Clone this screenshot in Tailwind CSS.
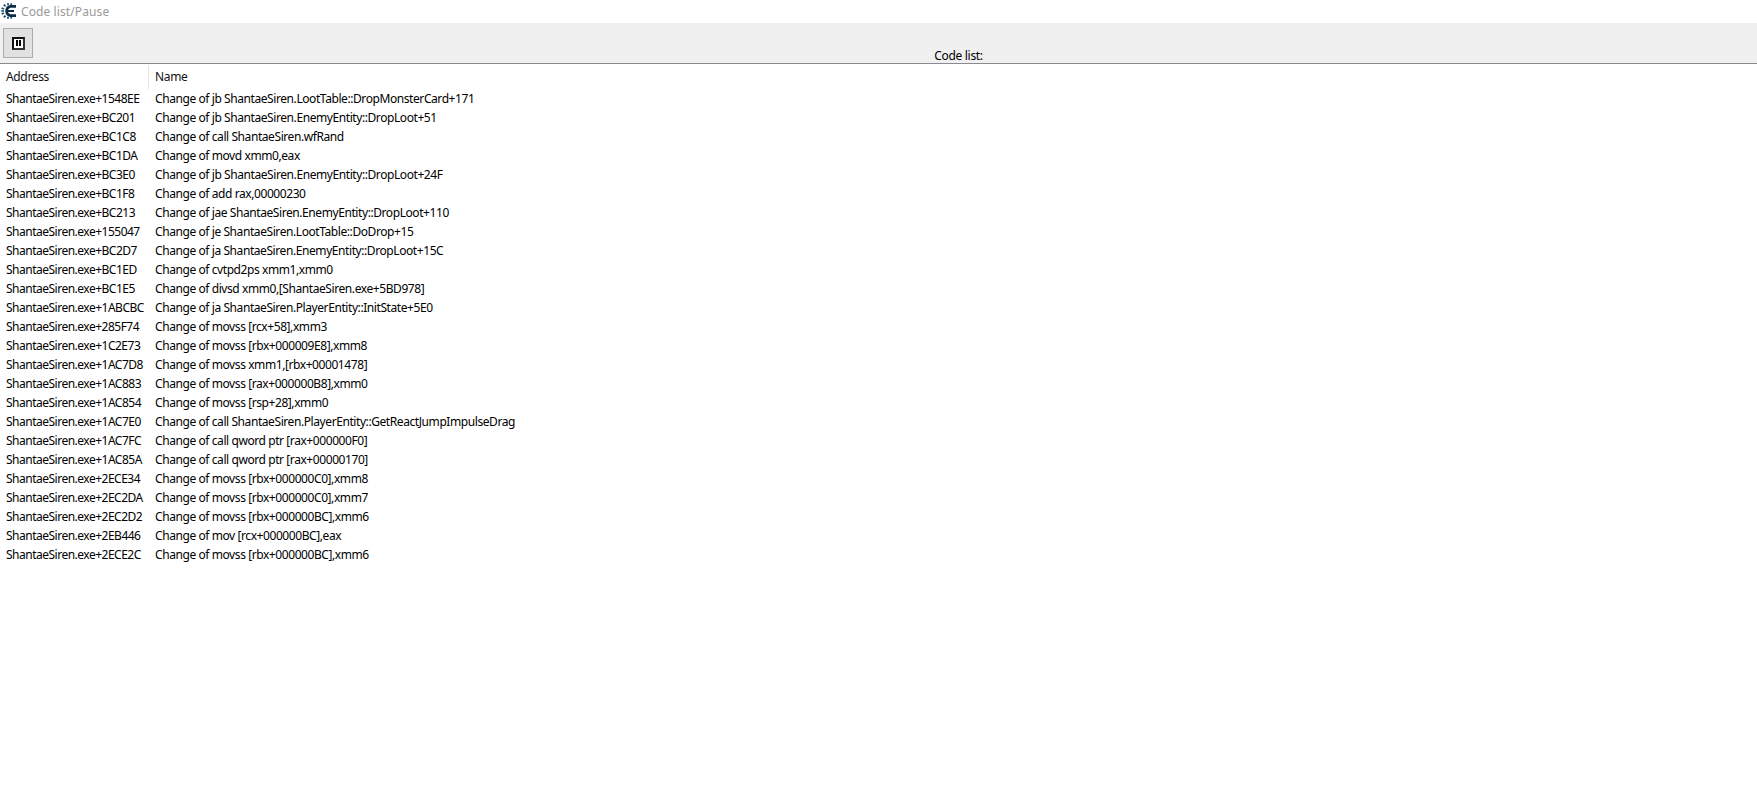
<!DOCTYPE html>
<html lang="en">
  <head>
    <meta charset="UTF-8" />
    <title>Code list/Pause</title>
    <script src="https://cdn.jsdelivr.net/npm/@tailwindcss/browser@4"></script>
  </head>
  <body class="bg-white text-black font-['Noto_Sans',sans-serif] text-[12px] h-[806px] overflow-hidden">
    <!-- title bar -->
    <div class="h-[23px] flex items-center pl-[1px]">
      <svg width="16" height="16" viewBox="0 0 16 16" class="mr-[4px] mt-[-1px]">
        <path d="M2.8 1.6 L4.6 3.4 M0.6 5 L3 6 M0.2 8 L3 8 M0.6 11 L3 10 M2.8 14.4 L4.6 12.6 M6.8 0.2 L7.2 2.4 M6.8 15.8 L7.2 13.6 M10.4 0.4 L10.2 2 M10.4 15.6 L10.2 14" stroke="#17506f" stroke-width="1.7" />
        <path d="M15 3.4 H9 A4.8 4.8 0 0 0 9 12.6 H15" fill="none" stroke="#0a2c47" stroke-width="2.6" />
        <path d="M6.5 8 H13" stroke="#0a2c47" stroke-width="2" />
      </svg>
      <span class="text-[#9a9a9a] tracking-[0.1px]">Code list/Pause</span>
    </div>

    <!-- toolbar -->
    <div class="h-[41px] bg-[#f0f0f0] border-b border-[#8a8a90] relative pl-[3px] pt-[5px]">
      <button class="w-[30px] h-[30px] bg-[#e1e1e1] border border-[#adadad] flex items-center justify-center">
        <span class="w-[13px] h-[13px] bg-white border-2 border-[#111] border-r-[#333] border-b-[#333] flex items-center justify-center gap-[1px]">
          <span class="w-[2px] h-[6px] bg-black"></span>
          <span class="w-[2px] h-[6px] bg-black"></span>
        </span>
      </button>
      <div class="absolute left-[160px] right-0 bottom-[-1px] text-center leading-[16px] tracking-[-0.3px]">Code list:</div>
    </div>

    <!-- list -->
    <div class="grid grid-cols-[149px_1fr] h-[25px] items-center text-[#111]">
      <div class="pl-[6px] h-[24px] leading-[24px] border-r border-[#e5e5e5] tracking-[-0.35px]">Address</div>
      <div class="pl-[6px] tracking-[-0.35px]">Name</div>
    </div>
    <div id="rows" class="tracking-[-0.42px] [&>div>span:first-child]:tracking-[-0.5px]">
      <div class="grid grid-cols-[149px_1fr] h-[19px] leading-[19px] pl-[6px]"><span>ShantaeSiren.exe+1548EE</span><span>Change of jb ShantaeSiren.LootTable::DropMonsterCard+171</span></div>
      <div class="grid grid-cols-[149px_1fr] h-[19px] leading-[19px] pl-[6px]"><span>ShantaeSiren.exe+BC201</span><span>Change of jb ShantaeSiren.EnemyEntity::DropLoot+51</span></div>
      <div class="grid grid-cols-[149px_1fr] h-[19px] leading-[19px] pl-[6px]"><span>ShantaeSiren.exe+BC1C8</span><span>Change of call ShantaeSiren.wfRand</span></div>
      <div class="grid grid-cols-[149px_1fr] h-[19px] leading-[19px] pl-[6px]"><span>ShantaeSiren.exe+BC1DA</span><span>Change of movd xmm0,eax</span></div>
      <div class="grid grid-cols-[149px_1fr] h-[19px] leading-[19px] pl-[6px]"><span>ShantaeSiren.exe+BC3E0</span><span>Change of jb ShantaeSiren.EnemyEntity::DropLoot+24F</span></div>
      <div class="grid grid-cols-[149px_1fr] h-[19px] leading-[19px] pl-[6px]"><span>ShantaeSiren.exe+BC1F8</span><span>Change of add rax,00000230</span></div>
      <div class="grid grid-cols-[149px_1fr] h-[19px] leading-[19px] pl-[6px]"><span>ShantaeSiren.exe+BC213</span><span>Change of jae ShantaeSiren.EnemyEntity::DropLoot+110</span></div>
      <div class="grid grid-cols-[149px_1fr] h-[19px] leading-[19px] pl-[6px]"><span>ShantaeSiren.exe+155047</span><span>Change of je ShantaeSiren.LootTable::DoDrop+15</span></div>
      <div class="grid grid-cols-[149px_1fr] h-[19px] leading-[19px] pl-[6px]"><span>ShantaeSiren.exe+BC2D7</span><span>Change of ja ShantaeSiren.EnemyEntity::DropLoot+15C</span></div>
      <div class="grid grid-cols-[149px_1fr] h-[19px] leading-[19px] pl-[6px]"><span>ShantaeSiren.exe+BC1ED</span><span>Change of cvtpd2ps xmm1,xmm0</span></div>
      <div class="grid grid-cols-[149px_1fr] h-[19px] leading-[19px] pl-[6px]"><span>ShantaeSiren.exe+BC1E5</span><span>Change of divsd xmm0,[ShantaeSiren.exe+5BD978]</span></div>
      <div class="grid grid-cols-[149px_1fr] h-[19px] leading-[19px] pl-[6px]"><span>ShantaeSiren.exe+1ABCBC</span><span>Change of ja ShantaeSiren.PlayerEntity::InitState+5E0</span></div>
      <div class="grid grid-cols-[149px_1fr] h-[19px] leading-[19px] pl-[6px]"><span>ShantaeSiren.exe+285F74</span><span>Change of movss [rcx+58],xmm3</span></div>
      <div class="grid grid-cols-[149px_1fr] h-[19px] leading-[19px] pl-[6px]"><span>ShantaeSiren.exe+1C2E73</span><span>Change of movss [rbx+000009E8],xmm8</span></div>
      <div class="grid grid-cols-[149px_1fr] h-[19px] leading-[19px] pl-[6px]"><span>ShantaeSiren.exe+1AC7D8</span><span>Change of movss xmm1,[rbx+00001478]</span></div>
      <div class="grid grid-cols-[149px_1fr] h-[19px] leading-[19px] pl-[6px]"><span>ShantaeSiren.exe+1AC883</span><span>Change of movss [rax+000000B8],xmm0</span></div>
      <div class="grid grid-cols-[149px_1fr] h-[19px] leading-[19px] pl-[6px]"><span>ShantaeSiren.exe+1AC854</span><span>Change of movss [rsp+28],xmm0</span></div>
      <div class="grid grid-cols-[149px_1fr] h-[19px] leading-[19px] pl-[6px]"><span>ShantaeSiren.exe+1AC7E0</span><span>Change of call ShantaeSiren.PlayerEntity::GetReactJumpImpulseDrag</span></div>
      <div class="grid grid-cols-[149px_1fr] h-[19px] leading-[19px] pl-[6px]"><span>ShantaeSiren.exe+1AC7FC</span><span>Change of call qword ptr [rax+000000F0]</span></div>
      <div class="grid grid-cols-[149px_1fr] h-[19px] leading-[19px] pl-[6px]"><span>ShantaeSiren.exe+1AC85A</span><span>Change of call qword ptr [rax+00000170]</span></div>
      <div class="grid grid-cols-[149px_1fr] h-[19px] leading-[19px] pl-[6px]"><span>ShantaeSiren.exe+2ECE34</span><span>Change of movss [rbx+000000C0],xmm8</span></div>
      <div class="grid grid-cols-[149px_1fr] h-[19px] leading-[19px] pl-[6px]"><span>ShantaeSiren.exe+2EC2DA</span><span>Change of movss [rbx+000000C0],xmm7</span></div>
      <div class="grid grid-cols-[149px_1fr] h-[19px] leading-[19px] pl-[6px]"><span>ShantaeSiren.exe+2EC2D2</span><span>Change of movss [rbx+000000BC],xmm6</span></div>
      <div class="grid grid-cols-[149px_1fr] h-[19px] leading-[19px] pl-[6px]"><span>ShantaeSiren.exe+2EB446</span><span>Change of mov [rcx+000000BC],eax</span></div>
      <div class="grid grid-cols-[149px_1fr] h-[19px] leading-[19px] pl-[6px]"><span>ShantaeSiren.exe+2ECE2C</span><span>Change of movss [rbx+000000BC],xmm6</span></div>
    </div>
  </body>
</html>
